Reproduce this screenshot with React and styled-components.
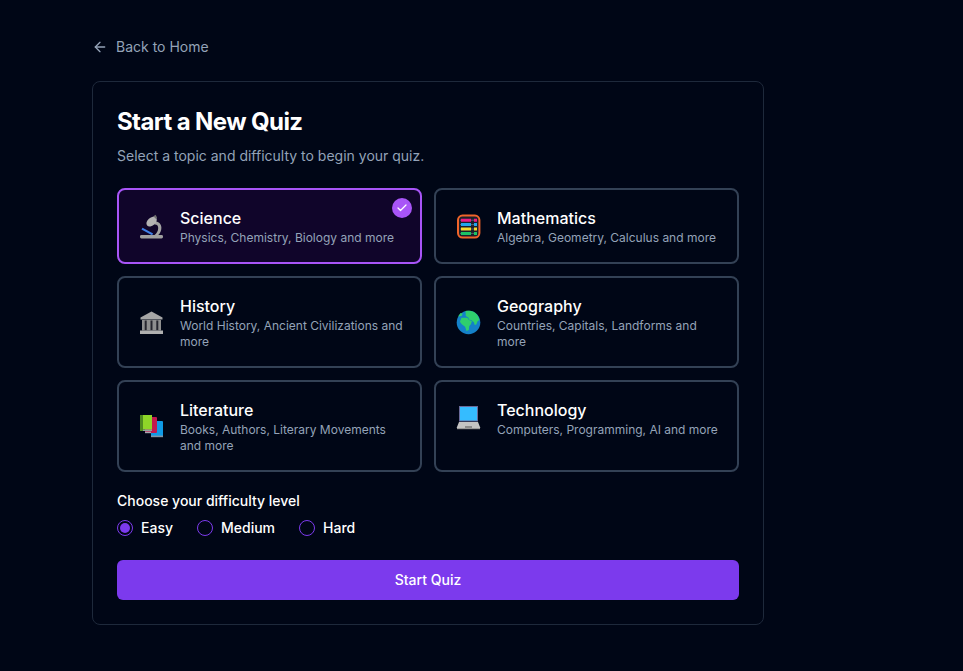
import React, { useState } from "react";
import styled, { createGlobalStyle } from "styled-components";
import { ArrowLeft, Check } from "lucide-react";

const GlobalStyle = createGlobalStyle`
  html, body {
    margin: 0;
    background: #000616;
    font-family: Inter, "Liberation Sans", sans-serif;
  }
  * { box-sizing: border-box; }
`;

const Page = styled.div`
  min-height: 671px;
  padding: 37px 0 46px 92px;
  background: #000616;
`;

const BackLink = styled.a`
  display: flex;
  align-items: center;
  gap: 8px;
  height: 20px;
  margin-bottom: 24px;
  color: #94a3b8;
  font-size: 14px;
  line-height: 20px;
`;

const Card = styled.div`
  width: 672px;
  padding: 24px;
  border: 1px solid #1e293b;
  border-radius: 8px;
  background: #000616;
`;

const Title = styled.h1`
  margin: 0;
  color: #fff;
  font-size: 24px;
  line-height: 32px;
  font-weight: 700;
  letter-spacing: -0.6px;
`;

const Subtitle = styled.p`
  margin: 8px 0 0;
  color: #94a3b8;
  font-size: 14px;
  line-height: 20px;
`;

const Grid = styled.div`
  display: grid;
  grid-template-columns: 1fr 1fr;
  gap: 12px;
  margin-top: 22px;
`;

const Topic = styled.label`
  position: relative;
  display: block;
  padding: 16px;
  border: 2px solid ${(p) => (p.$active ? "#a855f7" : "#334155")};
  border-radius: 8px;
  background: ${(p) => (p.$active ? "#10052a" : "transparent")};
  cursor: pointer;
`;

const TopicRow = styled.span`
  display: flex;
  align-items: center;
  gap: 12px;
`;

const IconBox = styled.span`
  display: flex;
  flex: 0 0 33px;
  align-items: center;
  justify-content: center;
  height: 25px;
`;

const TopicText = styled.span`
  display: flex;
  flex-direction: column;
`;

const TopicName = styled.span`
  color: #fff;
  font-size: 16px;
  line-height: 24px;
  font-weight: 500;
`;

const TopicDesc = styled.span`
  color: #94a3b8;
  font-size: 12px;
  line-height: 16px;
`;

const CheckBadge = styled.span`
  position: absolute;
  top: 8px;
  right: 8px;
  display: flex;
  align-items: center;
  justify-content: center;
  width: 20px;
  height: 20px;
  border-radius: 50%;
  background: #a855f7;
  color: #fff;
`;

const Label = styled.div`
  margin-top: 19px;
  color: #fff;
  font-size: 14px;
  line-height: 20px;
  font-weight: 500;
`;

const Levels = styled.div`
  display: flex;
  gap: 24px;
  margin-top: 7px;
`;

const Level = styled.label`
  display: flex;
  align-items: center;
  gap: 8px;
  color: #fff;
  font-size: 14px;
  line-height: 20px;
  font-weight: 500;
  cursor: pointer;
`;

const Radio = styled.span`
  display: flex;
  align-items: center;
  justify-content: center;
  width: 16px;
  height: 16px;
  border: 1px solid #7c3aed;
  border-radius: 50%;

  &::after {
    content: "";
    width: 10px;
    height: 10px;
    border-radius: 50%;
    background: ${(p) => (p.$on ? "#7c3aed" : "transparent")};
  }
`;

const StartButton = styled.button`
  display: block;
  width: 100%;
  height: 40px;
  margin-top: 22px;
  padding: 0 0 2px;
  border: 0;
  border-radius: 6px;
  background: #7c3aed;
  color: #fff;
  font-family: inherit;
  font-size: 14px;
  font-weight: 500;
  cursor: pointer;
`;

const Microscope = () => (
  <svg viewBox="0 0 25 25" width="25" height="25">
    <path d="M15 7.5c4.2-.6 7.4 2 7.4 6.2 0 3.2-1.4 5.6-3.2 7.3h-3.6c2-1.6 3.6-4 3.6-7 0-2.4-1.6-3.6-3.6-3.4z" fill="#a3a3a3" />
    <ellipse cx="12.6" cy="7.6" rx="4" ry="6" transform="rotate(48 12.6 7.6)" fill="#b3b3b3" />
    <path d="M14.5 2.2l2-1.4 1.6 2.6-1.4 1.4z" fill="#707070" />
    <rect x="1" y="21" width="23" height="3.4" rx="1.4" fill="#a0a0a0" />
    <path d="M3 14.6 13.6 20.4" stroke="#3f7fe8" strokeWidth="2.2" />
  </svg>
);

const Abacus = () => (
  <svg viewBox="0 0 25 25" width="25" height="25">
    <rect x="2" y="1.6" width="21.4" height="22" rx="4.5" fill="#1b1f2a" stroke="#f0642a" strokeWidth="2" />
    <path d="M4 6.2h17M4 10.6h17M4 15h17M4 19.4h17" stroke="#5a5f6a" strokeWidth="1" />
    <path d="M5 6.2h10M18 6.2h3" stroke="#ee1b84" strokeWidth="3" />
    <path d="M5 10.6h10M18 10.6h3" stroke="#22a5ee" strokeWidth="3" />
    <path d="M5 15h10M18 15h3" stroke="#f7d92e" strokeWidth="3" />
    <path d="M5 19.4h10M18 19.4h3" stroke="#1cc264" strokeWidth="3" />
  </svg>
);

const Temple = () => (
  <svg viewBox="0 0 25 25" width="25" height="25">
    <path d="M12.5 1.5 23.5 7.5v2h-22v-2z" fill="#a6a6a6" />
    <rect x="3" y="10" width="19" height="10.5" fill="#8f8f8f" />
    <path d="M6.7 10.5v10M12.5 10.5v10M18.3 10.5v10" stroke="#26262e" strokeWidth="2" />
    <rect x="1" y="20.5" width="23" height="3.5" fill="#b0b0b0" />
  </svg>
);

const Globe = () => (
  <svg viewBox="0 0 25 25" width="25" height="25">
    <circle cx="12.5" cy="12.5" r="11.8" fill="#1481c9" />
    <path d="M9.5 1c3-.6 7-.3 9.6 1.8 2.4 2 3.8 4.4 4.3 7.2l-1.8 1.2-1.3 3.4-1.6.3-.8-2.6-2.7-2.3-2.1-.2-.8-2.2-2.5-1.5z" fill="#2fcf6d" />
    <path d="M5.5 7.7h5.8l1.6 2.4 3 1-1 3.2-1.6 1.8-.5 4-2.3 1-1.4-4.4-3.3-2.4-1.9-2.6z" fill="#2fcf6d" />
    <path d="M2 6.5 4.5 3l2.2.6-1 2.4z" fill="#2fcf6d" />
  </svg>
);

const Books = () => (
  <svg viewBox="0 0 25 25" width="25" height="25">
    <rect x="12" y="7" width="12" height="16" rx="1" fill="#0f9ae6" />
    <rect x="12" y="21.6" width="12" height="1.6" fill="#7f97a8" />
    <rect x="6" y="3" width="12" height="16" rx="1" fill="#c21a4e" />
    <rect x="6" y="17.6" width="6" height="1.6" fill="#a5a5b0" />
    <rect x="1" y="1" width="3" height="16" fill="#4f8a20" />
    <rect x="4" y="1" width="9" height="14.6" fill="#8fd628" />
    <rect x="4" y="15.6" width="9" height="1.4" fill="#8fa5a0" />
  </svg>
);

const Laptop = () => (
  <svg viewBox="0 0 25 25" width="25" height="25">
    <rect x="3" y="0" width="19" height="15.5" fill="#6a6a9a" />
    <rect x="4" y="1" width="17" height="13.5" fill="#35bcff" />
    <path d="M3 16h19l2.4 6H.6z" fill="#c4c4c4" />
    <rect x="1" y="22" width="23" height="1.2" fill="#9a9a9a" />
    <rect x="9" y="20" width="7" height="2" fill="#8c8c8c" />
  </svg>
);

const topics = [
  { name: "Science", desc: "Physics, Chemistry, Biology and more", icon: Microscope },
  { name: "Mathematics", desc: "Algebra, Geometry, Calculus and more", icon: Abacus },
  { name: "History", desc: "World History, Ancient Civilizations and more", icon: Temple },
  { name: "Geography", desc: "Countries, Capitals, Landforms and more", icon: Globe },
  { name: "Literature", desc: "Books, Authors, Literary Movements and more", icon: Books },
  { name: "Technology", desc: "Computers, Programming, AI and more", icon: Laptop },
];

const levels = ["Easy", "Medium", "Hard"];

export default function App() {
  const [topic, setTopic] = useState("Science");
  const [level, setLevel] = useState("Easy");

  return (
    <Page>
      <GlobalStyle />
      <BackLink>
        <ArrowLeft size={16} strokeWidth={2} />
        Back to Home
      </BackLink>
      <Card>
        <Title>Start a New Quiz</Title>
        <Subtitle>Select a topic and difficulty to begin your quiz.</Subtitle>
        <Grid>
          {topics.map((t) => (
            <Topic key={t.name} $active={topic === t.name} onClick={() => setTopic(t.name)}>
              <TopicRow>
                <IconBox>
                  <t.icon />
                </IconBox>
                <TopicText>
                  <TopicName>{t.name}</TopicName>
                  <TopicDesc>{t.desc}</TopicDesc>
                </TopicText>
              </TopicRow>
              {topic === t.name && (
                <CheckBadge>
                  <Check size={12} strokeWidth={2.5} />
                </CheckBadge>
              )}
            </Topic>
          ))}
        </Grid>
        <Label>Choose your difficulty level</Label>
        <Levels>
          {levels.map((l) => (
            <Level key={l} onClick={() => setLevel(l)}>
              <Radio $on={level === l} />
              {l}
            </Level>
          ))}
        </Levels>
        <StartButton>Start Quiz</StartButton>
      </Card>
    </Page>
  );
}
